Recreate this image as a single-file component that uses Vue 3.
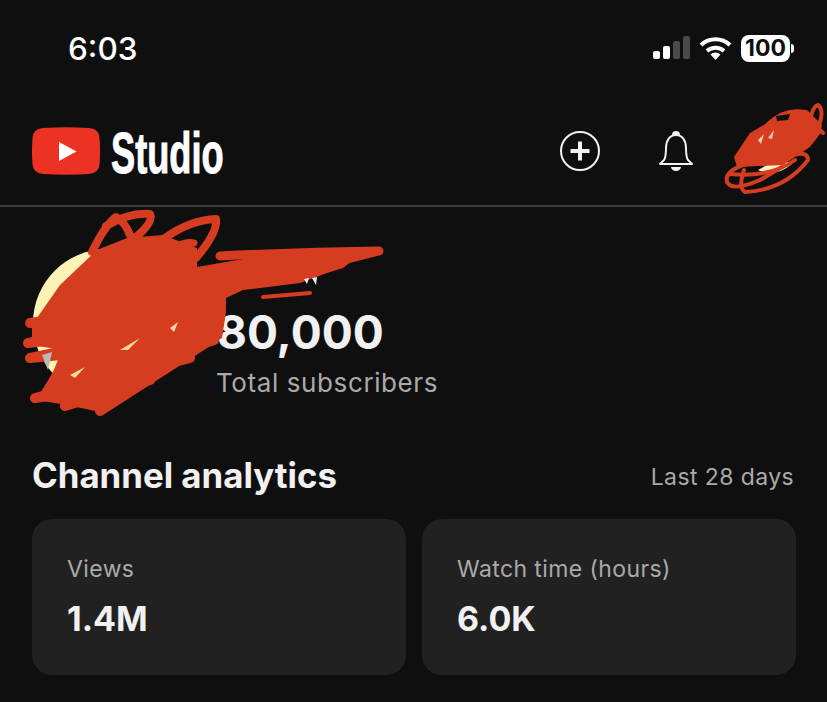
<script setup>
const cards = [
  { label: 'Views', value: '1.4M' },
  { label: 'Watch time (hours)', value: '6.0K' },
]
</script>

<template>
  <div class="page">
    <div class="status">
      <span class="time">6:03</span>
      <div class="status-icons">
        <svg width="38" height="24" viewBox="0 0 38 24">
          <rect x="1" y="15" width="7" height="8" rx="2" fill="#fff" />
          <rect x="11" y="10" width="7" height="13" rx="2" fill="#fff" />
          <rect x="21" y="5" width="7" height="18" rx="2" fill="#4a4a4a" />
          <rect x="31" y="0" width="7" height="23" rx="2" fill="#4a4a4a" />
        </svg>
        <svg class="wifi" width="33" height="24" viewBox="0 0 33 24">
          <path d="M2 9 A21 21 0 0 1 31 9" fill="none" stroke="#fff" stroke-width="4" />
          <path d="M8 15 A13 13 0 0 1 25 15" fill="none" stroke="#fff" stroke-width="4" />
          <path d="M11.5 18.5 A7 7 0 0 1 21.5 18.5 L16.5 24 Z" fill="#fff" />
        </svg>
        <div class="battery"><span>100</span></div>
        <span class="nub"></span>
      </div>
    </div>

    <header class="topbar">
      <div class="brand">
        <svg class="logo" width="68" height="48" viewBox="0 0 68 48">
          <path d="M11 1 Q34 -0.5 57 1 Q67 1.500 67.500 11 Q68.500 24 67.500 37 Q67 46 57 47 Q34 48.500 11 47 Q1 46 .5 37 Q-.5 24 .5 11 Q1 2 11 1 Z" fill="#ec3323" />
          <path d="M27 15 L44.500 24.500 L27 34 Z" fill="#fff" />
        </svg>
        <span class="wordmark">Studio</span>
      </div>
      <div class="actions">
        <svg width="42" height="42" viewBox="0 0 42 42">
          <circle cx="21" cy="21" r="19" fill="none" stroke="#f1f1f1" stroke-width="2" />
          <path d="M21 11.500 V30.500 M11.500 21 H30.500" stroke="#f1f1f1" stroke-width="4" />
        </svg>
        <svg class="bell" width="36" height="42" viewBox="0 0 36 42">
          <path d="M2 34 Q3 33 6 30 Q8 27 8 18 C8 10 12 5 18 5 C24 5 28 10 28 18 Q28 27 30 30 Q33 33 34 34 Z" fill="none" stroke="#f1f1f1" stroke-width="2" stroke-linejoin="round" />
          <path d="M14 5 A4 4 0 0 1 22 5 Z" fill="#f1f1f1" />
          <path d="M13 37 H23 A5 4 0 0 1 13 37 Z" fill="#f1f1f1" />
        </svg>
        <span class="avatar-slot"></span>
      </div>
    </header>

    <section class="profile">
      <span class="avatar"></span>
      <div class="subs">
        <div class="subs-value">80,000</div>
        <div class="subs-label">Total subscribers</div>
      </div>
    </section>

    <section class="analytics">
      <div class="analytics-head">
        <h2>Channel analytics</h2>
        <span>Last 28 days</span>
      </div>
      <div class="cards">
        <div v-for="card in cards" :key="card.label" class="card">
          <div class="card-label">{{ card.label }}</div>
          <div class="card-value">{{ card.value }}</div>
        </div>
      </div>
    </section>

    <svg class="scribble" width="827" height="702" viewBox="0 0 827 702">
      <!-- top-right avatar scribble -->
      <path d="M758 170 Q775 178 792 164 L780 158 Z" fill="#fdf3c0" />
      <path d="M734 157 L750 133 L777 117 L807 110 L822 125 L820 134 L810 147 L783 165 L737 167 Z" fill="#d63d20" />
      <g fill="none" stroke="#d63d20" stroke-linecap="round" stroke-linejoin="round">
        <path stroke-width="4" d="M768 124 Q785 108 805 112" />
        <path stroke-width="4" d="M810 120 Q813 106 818 105 Q825 110 818 128 L823 133" />
        <path stroke-width="4" d="M750 163 Q724 170 727 182 Q732 192 760 180 L782 167" />
        <path stroke-width="4" d="M744 170 Q738 188 745 192 Q785 190 808 160 Q808 150 790 156" />
        <path stroke-width="4" d="M730 174 Q770 178 795 160" />
      </g>
      <path d="M776 116 L790 114 L788 120 L777 121 Z" fill="#0f0f0f" />
      <path d="M768 138 L774 130 L772 139 Z M758 140 L764 134 L761 144 Z" fill="#f2c9a8" />

      <!-- profile scribble -->
      <path d="M32 325 L60 285 L97 250 L127 238 L163 235 L197 248 L197 267 L277 253 L370 247 L343 268 L327 273 L300 283 L243 290 L226 298 L226 312 L222 338 L150 375 L100 412 L67 405 L36 400 L53 372 L62 350 L32 345 Z" fill="#d63d20" />
      <g fill="none" stroke="#d63d20" stroke-linecap="round" stroke-linejoin="round">
        <path stroke-width="9" d="M220 256 Q300 252 379 251 L320 266" />
        <path stroke-width="10" d="M30 323 L200 300 L28 343 L215 320 L30 358 L214 340 L60 392 L190 358 L35 398 L150 380 L65 406 L160 370 L100 411 L215 337" />
        <path stroke-width="8" d="M92 252 Q105 225 116 217 Q125 222 130 235 M106 226 Q130 212 150 214 Q154 222 135 238" />
        <path stroke-width="8" d="M165 238 Q190 220 216 219 Q218 232 196 258" />
        <path stroke-width="7" d="M165 258 Q180 240 194 243" />
        <path stroke-width="4" d="M263 297 L310 293" />
      </g>
      <path d="M42 355 L52 352 L48 370 Z" fill="#b9b9b9" />
      <path d="M304 279 L309 278 L307 284 Z M312 278 L317 277 L316 285 Z" fill="#f1f1f1" />
      <path d="M70 375 L85 367 L75 378 Z M120 350 L140 338 L128 350 Z M170 328 L178 322 L174 332 Z" fill="#f7d9a4" />
    </svg>
  </div>
</template>

<style>
body { background: #0f0f0f; }
</style>

<style scoped>
.page {
  position: relative;
  width: 827px;
  height: 702px;
  overflow: hidden;
  background: #0f0f0f;
  color: #f1f1f1;
  font-family: Inter, Roboto, "Liberation Sans", sans-serif;
}
.status {
  height: 100px;
  box-sizing: border-box;
  padding: 33px 33px 0 68px;
  display: flex;
  justify-content: space-between;
  align-items: flex-start;
}
.time {
  font-family: Inter, "Liberation Sans", sans-serif;
  font-size: 31.5px;
  line-height: 32px;
  font-weight: 500;
  color: #fff;
}
.status-icons {
  display: flex;
  align-items: center;
  gap: 9px;
  height: 30px;
}
.battery {
  width: 49px;
  height: 27px;
  background: #fff;
  border-radius: 8px;
  color: #0f0f0f;
  display: flex;
  align-items: center;
  justify-content: center;
  font-family: Inter, "Liberation Sans", sans-serif;
  font-size: 23px;
  font-weight: 700;
}
.nub {
  width: 3px;
  height: 9px;
  margin-left: -8px;
  background: #fff;
  border-radius: 0 3px 3px 0;
}
.topbar {
  height: 105px;
  box-sizing: content-box;
  border-bottom: 2px solid #3d3d3d;
  padding: 0 32px;
  display: flex;
  justify-content: space-between;
  align-items: center;
}
.brand {
  display: flex;
  align-items: center;
  gap: 11px;
}
.logo { margin-top: -4px; }
.wordmark {
  font-family: "Liberation Sans", sans-serif;
  font-size: 57px;
  line-height: 52px;
  font-weight: 700;
  color: #fff;
  width: 112px;
  display: inline-block;
  -webkit-text-stroke: 1px #fff;
  transform: scaleX(0.635);
  transform-origin: left center;
}
.actions {
  display: flex;
  align-items: center;
  gap: 59px;
  margin-top: -3px;
}
.bell { margin-left: -2px; margin-right: 2px; }
.avatar-slot {
  width: 46px;
  height: 68px;
  margin-left: -7px;
  margin-right: 1px;
}
.profile {
  height: 211px;
  display: flex;
  align-items: flex-start;
  padding-left: 33px;
  gap: 36px;
}
.avatar {
  width: 148px;
  height: 148px;
  margin-top: 42px;
  border-radius: 50%;
  background: #fdf3b4;
  flex: none;
}
.subs { padding-top: 95px; }
.subs-value {
  font-size: 46px;
  line-height: 60px;
  font-weight: 700;
  color: #f1f1f1;
}
.subs-label {
  font-size: 26px;
  line-height: 32px;
  color: #aaaaaa;
  margin-top: 5px;
  margin-left: -1px;
  letter-spacing: 0.6px;
}
.analytics { padding: 0 31px 0 32px; }
.analytics-head {
  display: flex;
  justify-content: space-between;
  align-items: center;
  padding: 20px 2px 0 0;
  height: 62px;
  box-sizing: border-box;
  margin-top: 16px;
}
.analytics-head h2 {
  margin: 0;
  font-size: 34.8px;
  line-height: 40px;
  font-weight: 700;
}
.analytics-head span {
  font-size: 23px;
  color: #aaaaaa;
  letter-spacing: 0.4px;
  margin-top: 3px;
}
.cards {
  display: grid;
  grid-template-columns: 374px 374px;
  gap: 16px;
  margin-top: 23px;
}
.card {
  height: 156px;
  box-sizing: border-box;
  padding: 35px 35px 0;
  background: #212121;
  border-radius: 20px;
}
.card-label {
  font-size: 23px;
  line-height: 30px;
  color: #aaaaaa;
  letter-spacing: 0.4px;
}
.card-value {
  margin-top: 15px;
  font-size: 34px;
  line-height: 40px;
  font-weight: 700;
  color: #f1f1f1;
}
.scribble {
  position: absolute;
  left: 0;
  top: 0;
  pointer-events: none;
}
</style>
